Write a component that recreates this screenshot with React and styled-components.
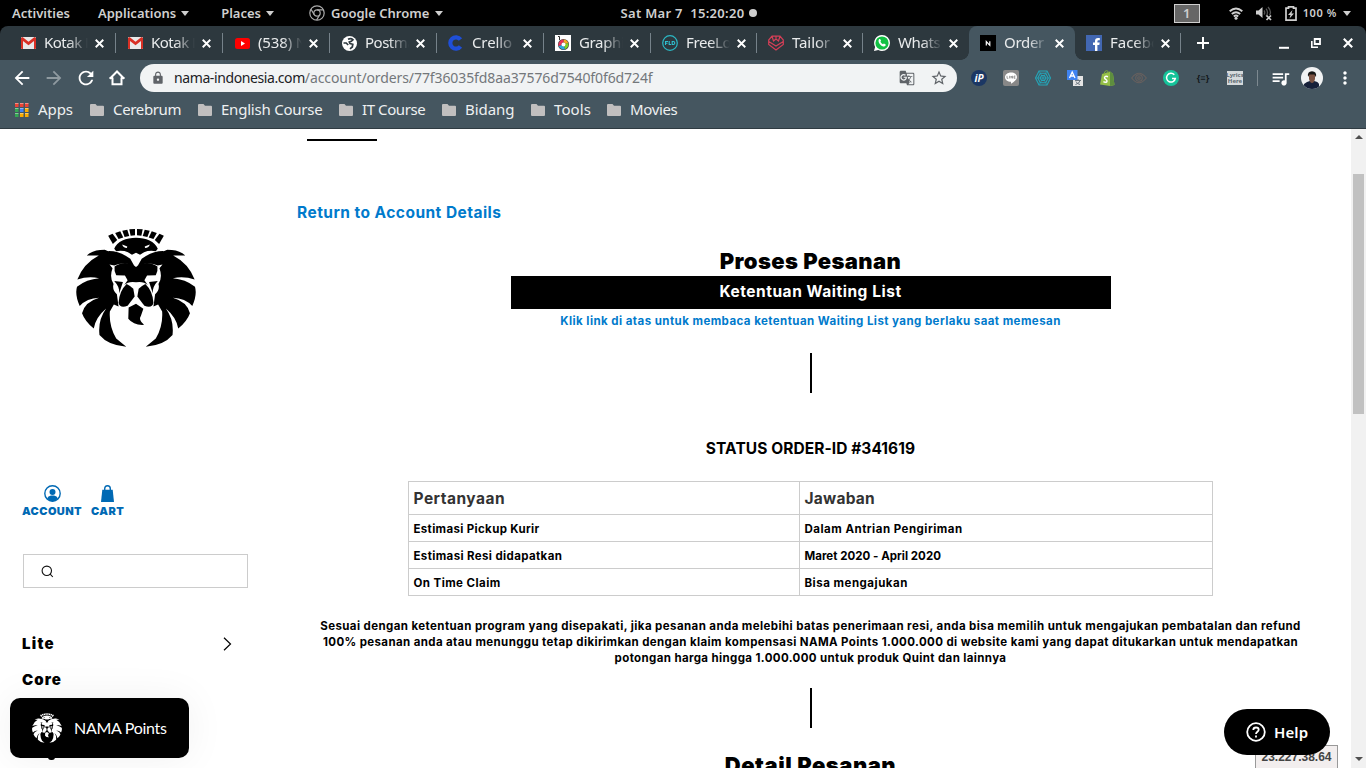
import React from "react";
import styled, { createGlobalStyle } from "styled-components";
import { MdArrowBack, MdArrowForward, MdRefresh, MdLock, MdGTranslate, MdStarBorder, MdMoreVert, MdQueueMusic } from "react-icons/md";

const ui = '"Noto Sans", sans-serif';
const brand = 'Inter, "Noto Sans", sans-serif';

const Global = createGlobalStyle`
  * { box-sizing: border-box; }
  body { margin: 0; background: #fff; overflow: hidden; }
  svg { display: block; flex: none; }
`;

const Screen = styled.div`
  width: 1366px;
  height: 768px;
  overflow: hidden;
  display: flex;
  flex-direction: column;
  position: relative;
  background: #000;
`;

/* Desktop bar */
const DesktopBar = styled.div`
  height: 26px;
  flex: none;
  display: grid;
  grid-template-columns: 1fr auto 1fr;
  align-items: center;
  padding: 0 15px 0 12px;
  color: #cfcfcf;
  font: 600 13px/26px ${ui};
  white-space: pre;
`;
const BarMenus = styled.div`
  display: flex;
  align-items: center;
`;
const BarMenu = styled.div`
  display: flex;
  align-items: center;
  gap: ${(p) => p.$gap || 5}px;
  margin-right: ${(p) => p.$after}px;
`;
const Caret = styled.i`
  border: solid transparent;
  border-width: 5px 4.5px 0;
  border-top-color: #cfcfcf;
`;
const Clock = styled.div`
  display: flex;
  align-items: center;
  gap: 4px;
  letter-spacing: 0.31px;
  margin-left: 14px;
`;
const Dot = styled.i`
  width: 8px;
  height: 8px;
  border-radius: 50%;
  background: #cfcfcf;
`;
const BarStatus = styled.div`
  display: flex;
  align-items: center;
  justify-content: flex-end;
`;
const Workspace = styled.span`
  width: 26px;
  height: 19px;
  border: 1px solid #cfcfcf;
  background: #666;
  text-align: center;
  line-height: 17px;
  margin-right: 29px;
`;
const Percent = styled.span`
  font-size: 11px;
  letter-spacing: 0.6px;
  margin: 0 6px 0 6px;
`;

/* Browser chrome */
const TabStrip = styled.div`
  height: 34px;
  flex: none;
  display: flex;
  background: #2d383e;
  border-radius: 8px 8px 0 0;
  padding-left: 9px;
`;
const TabBox = styled.div`
  position: relative;
  width: ${(p) => p.$w}px;
  flex: none;
  display: flex;
  align-items: center;
  padding: 0 0 0 11px;
  color: #e9ebec;
  background: ${(p) => (p.$active ? "#455660" : "transparent")};
  border-radius: 8px 8px 0 0;
  &::after {
    content: "";
    position: absolute;
    right: 0;
    top: 7px;
    width: 1px;
    height: 20px;
    background: ${(p) => (p.$line ? "#76828a" : "transparent")};
  }
`;
const Foot = styled.i`
  position: absolute;
  bottom: 0;
  ${(p) => p.$side}: -8px;
  width: 8px;
  height: 8px;
  background: radial-gradient(circle at ${(p) => (p.$side === "left" ? "0 0" : "100% 0")}, #2d383e 7.5px, #455660 8px);
`;
const TabTitle = styled.span`
  width: 44px;
  margin: 0 7px 0 8px;
  overflow: hidden;
  white-space: pre;
  font: 400 15px/32px ${ui};
  height: 34px;
  letter-spacing: ${(p) => p.$ls}px;
  mask-image: linear-gradient(90deg, #000 55%, transparent 100%);
`;
const NewTab = styled.div`
  display: flex;
  align-items: center;
  margin-left: 16px;
`;
const WindowButtons = styled.div`
  display: flex;
  align-items: center;
  gap: 22px;
  margin-left: auto;
  padding-right: 13px;
`;
const Toolbar = styled.div`
  height: 36px;
  flex: none;
  display: flex;
  align-items: center;
  background: #455660;
  color: #fff;
  padding: 0 11px 0 11px;
`;
const NavButtons = styled.div`
  display: flex;
  align-items: center;
  width: 129px;
  gap: 10px;
`;
const Omnibox = styled.div`
  width: 817px;
  height: 28px;
  border-radius: 14px;
  background: #f1f3f4;
  display: flex;
  align-items: center;
  color: #5f6368;
  padding: 0 9px 0 11px;
`;
const Address = styled.div`
  margin-left: 9px;
  flex: 1;
  display: flex;
  font: 400 14px/28px ${ui};
  color: #73777b;
  letter-spacing: -0.1px;
`;
const Host = styled.span`
  color: #202124;
  letter-spacing: -0.4px;
`;
const OmniActions = styled.div`
  display: flex;
  align-items: center;
  gap: 15px;
`;
const Extensions = styled.div`
  display: flex;
  align-items: center;
  gap: 16px;
  margin-left: 14px;
`;
const ToolEnd = styled.div`
  display: flex;
  align-items: center;
  margin-left: 14px;
`;
const Divider = styled.i`
  width: 1px;
  height: 16px;
  background: #7d8990;
  margin-right: 12px;
`;
const Bookmarks = styled.div`
  height: 33px;
  flex: none;
  display: flex;
  background: #455660;
  border-bottom: 1px solid #2f3b42;
  padding: 0 0 4px 15px;
  color: #eef0f1;
  font: 400 15px/26px ${ui};
  white-space: pre;
`;
const Bookmark = styled.div`
  display: flex;
  align-items: center;
  gap: 9px;
  width: ${(p) => p.$w}px;
  letter-spacing: ${(p) => p.$ls}px;
`;
const BookmarkName = styled.span`
  height: 28px;
`;

/* Web page */
const Page = styled.div`
  flex: 1;
  min-height: 0;
  display: flex;
  background: #fff;
  overflow: hidden;
`;
const Sidebar = styled.aside`
  width: 270px;
  padding: 99px 22px 0;
  color: #000;
`;
const LogoWrap = styled.div`
  display: flex;
  padding-left: 54px;
  height: 257px;
`;
const QuickLinks = styled.div`
  display: flex;
  gap: 9px;
  color: #0069b4;
  font: 900 11px/12px ${brand};
`;
const QuickLink = styled.a`
  display: flex;
  flex-direction: column;
  align-items: center;
  gap: 3px;
  letter-spacing: ${(p) => p.$ls}px;
`;
const SearchBox = styled.div`
  width: 225px;
  height: 34px;
  margin: 37px 0 0 1px;
  border: 1px solid #ccc;
  display: flex;
  align-items: center;
  padding-left: 17px;
`;
const SideNav = styled.nav`
  padding-top: 38px;
`;
const SideItem = styled.a`
  height: 36px;
  display: flex;
  align-items: center;
  justify-content: space-between;
  padding-right: 16px;
  font: 900 15px/36px ${brand};
  letter-spacing: ${(p) => p.$ls}px;
`;
const Main = styled.main`
  width: 1081px;
  display: flex;
  flex-direction: column;
  align-items: center;
  white-space: nowrap;
  font-family: ${brand};
  font-weight: 700;
  color: #000;
`;
const TitleRule = styled.i`
  align-self: flex-start;
  flex: none;
  width: 70px;
  height: 2px;
  background: #000;
  margin: 10px 0 0 37px;
`;
const BackLink = styled.a`
  align-self: flex-start;
  margin: 61px 0 0 27px;
  color: #007acc;
  font-size: 15.5px;
  line-height: 22px;
  letter-spacing: 0.46px;
`;
const Heading = styled.h2`
  margin: ${(p) => p.$top}px 0 0;
  font-size: 22px;
  font-weight: 900;
  line-height: 30px;
  letter-spacing: ${(p) => p.$ls}px;
`;
const TermsButton = styled.a`
  width: 600px;
  height: 33px;
  flex: none;
  background: #000;
  color: #fff;
  text-align: center;
  font-size: 15.5px;
  line-height: 32px;
  letter-spacing: 0.53px;
`;
const TermsNote = styled.a`
  color: #007acc;
  font-size: 11.5px;
  line-height: 16px;
  letter-spacing: 0.44px;
  margin-top: 4px;
`;
const Stem = styled.i`
  width: 2px;
  height: 40px;
  flex: none;
  background: #000;
  margin: ${(p) => p.$top}px 0 0 1px;
`;
const Status = styled.h3`
  margin: 45px 0 0;
  font-size: 15.5px;
  line-height: 22px;
  letter-spacing: 0.07px;
`;
const Table = styled.table`
  width: 805px;
  margin: 21px 1px 0 0;
  border-collapse: collapse;
  table-layout: fixed;
`;
const Cell = styled.td`
  border: 1px solid #ccc;
  height: ${(p) => (p.$head ? 33 : 27)}px;
  width: ${(p) => p.$w}px;
  padding: ${(p) => (p.$head ? 0 : 1)}px 5px 0;
  color: ${(p) => (p.$head ? "#333" : "#000")};
  font-size: ${(p) => (p.$head ? 15.5 : 11.5)}px;
  letter-spacing: ${(p) => p.$ls}px;
`;
const Policy = styled.div`
  margin-top: 22px;
  text-align: center;
  font-size: 11.5px;
  line-height: 16px;
`;
const PolicyLine = styled.div`
  letter-spacing: ${(p) => p.$ls}px;
`;
const Scrollbar = styled.div`
  width: 15px;
  background: #f1f1f1;
  display: flex;
  flex-direction: column;
  align-items: center;
  padding: 6px 0 7px;
`;
const ScrollArrow = styled.i`
  border: solid transparent;
  border-width: ${(p) => (p.$up ? "0 4px 4px" : "4px 4px 0")};
  border-color: ${(p) => (p.$up ? "transparent transparent #505050" : "#505050 transparent transparent")};
  margin-top: ${(p) => (p.$up ? 0 : "auto")};
`;
const Thumb = styled.i`
  width: 11px;
  height: 240px;
  background: #c1c1c1;
  margin-top: 35px;
`;

/* Floating widgets */
const PointsWidget = styled.div`
  position: absolute;
  left: 10px;
  top: 698px;
  width: 179px;
  height: 60px;
  border-radius: 10px;
  background: #000;
  color: #fff;
  display: flex;
  align-items: center;
  gap: 12px;
  padding-left: 22px;
  font: 400 16px/60px Lato, sans-serif;
  letter-spacing: -0.3px;
  box-shadow: 0 0 40px rgba(0, 0, 0, 0.06);
  &::after {
    content: "";
    position: absolute;
    left: 38px;
    bottom: -2px;
    width: 7px;
    height: 3px;
    background: #000;
    border-radius: 0 0 4px 4px;
  }
`;
const HelpWidget = styled.div`
  position: absolute;
  left: 1224px;
  top: 709px;
  width: 106px;
  height: 46px;
  border-radius: 23px;
  background: #000;
  color: #fff;
  display: flex;
  align-items: center;
  gap: 8px;
  padding-left: 22px;
  font: 600 15px/46px ${ui};
  letter-spacing: 0.1px;
`;
const HostAddress = styled.div`
  position: absolute;
  left: 1255px;
  top: 745px;
  width: 83px;
  height: 24px;
  border: 1px solid #999;
  background: #f2eeee;
  color: #444;
  text-align: center;
  font: 700 12px/22px "Liberation Sans", sans-serif;
`;

const LION_HALF = [
  "M146 61L159 55L173 74L160 86Z",
  "M167 53L182 48L191 66L177 71Z",
  "M188 46L203 43L209 62L195 65Z",
  "M209 42L226 41L226 60L213 61Z",
  "M229 67C200 67 172 78 164 100L170 107Q190 104 205 110L217 118L229 112ZM188 87L203 93L202 98Q190 97 188 87Z",
  "M82 120Q98 106 122 104L136 103L146 107Q180 106 212 130L224 151Q192 138 164 150L150 147L159 158Q149 185 162 205Q157 222 172 236L177 272L163 266L151 287Q148 330 170 368L200 392Q146 388 120 357Q115 312 140 278Q108 305 103 338Q76 315 68 292Q77 258 119 246Q82 247 61 271Q46 237 53 213Q82 191 119 188Q86 181 54 192Q72 144 118 120Z",
  "M229 154L219 147Q190 135 165 153Q163 168 170 179L196 180L204 194L194 208Q207 196 229 200Z",
  "M164 196L190 199L179 233Q181 214 164 196Z",
  "M201 205Q213 211 221 219L225 242L204 270Q181 279 177 261Q179 226 201 205Z",
];

function Lion({ size, color }) {
  return (
    <svg width={size} height={size} viewBox="50 38 358 358" fill={color} fillRule="evenodd">
      {LION_HALF.map((d) => <path key={d} d={d} />)}
      <g transform="translate(458 0) scale(-1 1)">
        {LION_HALF.map((d) => <path key={d} d={d} />)}
      </g>
      <path d="M207 275L229 264L251 279L244 299Q235 312 253 327Q222 329 206 309Z" />
    </svg>
  );
}

const Gmail = () => (
  <svg width="15" height="12" viewBox="0 0 15 12"><rect width="15" height="12" rx="1" fill="#e9e9e9" /><path d="M0 1v10q0 1 1 1h1V4l5.500 4.200L13 4v8h1q1 0 1-1V1L13.500 0 7.500 4.800 1.500 0Z" fill="#d93025" /></svg>
);
const YouTube = () => (
  <svg width="15" height="11" viewBox="0 0 15 11"><rect width="15" height="11" rx="2.500" fill="#f00" /><path d="M6 3l4 2.500L6 8z" fill="#fff" /></svg>
);
const Globe = () => (
  <svg width="15" height="15" viewBox="0 0 15 15"><circle cx="7.500" cy="7.500" r="7.500" fill="#fff" /><path d="M6 3.300Q9 1.800 11 3.800L9.300 5.300 7.300 6 8 7.500l2.800.8-.5 2.700L8 12.800M1.500 7h2.700l2 2" stroke="#2d383e" strokeWidth="1.700" fill="none" /></svg>
);
const Crello = () => (
  <svg width="16" height="16" viewBox="0 0 16 16"><path d="M12.500 4.500A5.700 5.700 0 1 0 12.500 11.500" fill="none" stroke="#1f4fd8" strokeWidth="4.200" /></svg>
);
const Burner = () => (
  <svg width="16" height="16" viewBox="0 0 16 16"><rect width="16" height="16" fill="#fff" /><path d="M3 1.500h1.500V5" stroke="#333" fill="none" /><circle cx="8.500" cy="9.500" r="5.500" fill="#444" /><g fill="none" strokeWidth="3"><path d="M8.500 6a3.500 3.500 0 0 1 3.300 2.500" stroke="#f5a623" /><path d="M11.800 8.500A3.500 3.500 0 0 1 9.500 12.800" stroke="#7ed321" /><path d="M9.500 12.800A3.500 3.500 0 0 1 5.200 10.500" stroke="#29a9e0" /><path d="M5.200 10.500A3.500 3.500 0 0 1 8.500 6" stroke="#e8305a" /></g><circle cx="8.500" cy="9.500" r="2" fill="#fff" /></svg>
);
const Fld = () => (
  <svg width="16" height="16" viewBox="0 0 16 16"><circle cx="8" cy="8" r="7.300" fill="none" stroke="#2bb8c4" strokeWidth="1.200" /><path d="M3.500 10V6.500H6M3.500 8.200h2M7.200 6v3.500H9M10.200 6.500v3h1q1.600 0 1.600-1.500t-1.600-1.500z" fill="none" stroke="#2fc0d0" strokeWidth="1.100" /></svg>
);
const Tailor = () => (
  <svg width="16" height="16" viewBox="0 0 16 16" fill="none" stroke="#d43f57" strokeWidth="1.200"><path d="M4 1.200h8L15.300 5v4.500L8 15 .7 9.500V5zM4 1.200L5.500 6 8 4l2.500 2L12 1.200M.7 6.500L8 11l7.300-4.500M8 1.200V4" /></svg>
);
const WhatsApp = () => (
  <svg width="16" height="16" viewBox="0 0 16 16"><path d="M8 0a8 8 0 0 1 0 16 8 8 0 0 1-3.700-1L0 16l1.100-4.100A8 8 0 0 1 8 0Z" fill="#fff" /><circle cx="8" cy="8" r="6.600" fill="#12c143" /><path d="M5 4.300c1-.8 1.600 0 2 1.400l-.6 1.100c.6 1.100 1.400 1.800 2.500 2.400l1-.8c1.700.7 2.200 1 1.700 2-1 1.600-3.200 1.200-5-.5C4.700 8.200 3.900 5.800 5 4.300Z" fill="#fff" /></svg>
);
const NamaIcon = () => (
  <svg width="16" height="16" viewBox="0 0 16 16"><rect width="16" height="16" fill="#000" /><path d="M6.300 10.500v-4l3.500 3.800v-4" fill="none" stroke="#fff" strokeWidth="1.200" /></svg>
);
const Facebook = () => (
  <svg width="16" height="16" viewBox="0 0 16 16"><rect width="16" height="16" fill="#4267b2" /><path d="M9 16v-6H7V7.600h2V6q0-3.100 3.100-3.100h1.700V5.200h-1.400q-1 0-1 1v1.400h2.300L13.300 10h-1.900v6z" fill="#fff" /></svg>
);
const CloseMark = ({ size = 9 }) => (
  <svg width={size} height={size} viewBox="0 0 10 10"><path d="M.8.8l8.400 8.400M9.200.8L.8 9.200" stroke="#fff" strokeWidth="2.100" /></svg>
);

const TABS = [
  [Gmail, "Kotak M", -0.5], [Gmail, "Kotak M", -0.5], [YouTube, "(538) N", -0.15], [Globe, "Postma", -0.5],
  [Crello, "Crello", -0.11], [Burner, "Graphi", -0.35], [Fld, "FreeLo", -0.4], [Tailor, "Tailor", -0.1],
  [WhatsApp, "Whats", -0.4], [NamaIcon, "Order", -0.3], [Facebook, "Facebo", -0.02],
];

const Badge = styled.span`
  width: 16px;
  height: 16px;
  flex: none;
  display: flex;
  align-items: center;
  justify-content: center;
  border-radius: ${(p) => p.$r || 0};
  background: ${(p) => p.$bg || "transparent"};
  color: ${(p) => p.$fg || "#fff"};
  font: ${(p) => p.$font};
  white-space: nowrap;
`;
const LyricsBadge = styled(Badge)`
  flex-direction: column;
  color: #5b6870;
  background: #d5d9db;
  height: 14px;
  font: 700 6px/6.5px ${ui};
`;

const LineIcon = () => (
  <svg width="16" height="16" viewBox="0 0 16 16"><rect width="16" height="16" rx="2" fill="#888" /><path d="M8 2.500c3.500 0 6 2 6 4.700 0 2.300-2.700 4.300-6 6.500v-2c-3.500 0-6-2-6-4.500S4.500 2.500 8 2.500Z" fill="#fff" /><path d="M4 5.800v2.500h1.300M6.600 5.800v2.600M8 8.400V6l1.500 2.300V5.800M12.400 6H11v2.300h1.400M11 7.100h1.300" stroke="#888" strokeWidth=".8" fill="none" /></svg>
);
const Polygon = () => (
  <svg width="16" height="16" viewBox="0 0 16 16" fill="none" stroke="#24a5b8" strokeWidth="1.100"><path d="M4 1h8l3.500 7-3.500 7H4L.5 8zM5.300 3.300h5.400L13.200 8l-2.500 4.700H5.300L2.800 8zM6.500 5.500h3L10.800 8l-1.300 2.500h-3L5.200 8z" /><path d="M4 1l8 14M12 1L4 15M.5 8h15" strokeWidth=".7" /></svg>
);
const Translate = () => (
  <svg width="16" height="16" viewBox="0 0 16 16"><rect x="6" y="6" width="10" height="10" fill="#e4e4e4" /><rect width="10.500" height="10" fill="#3f83f1" /><path d="M2.500 8L5.200 2 8 8M3.500 6h3.500" stroke="#fff" strokeWidth="1.300" fill="none" /><path d="M8 10.500h6M11 9v1.500M13 10.500q-.5 3-4.500 4M9 11.500q1 2.500 4 3" stroke="#6b7680" fill="none" /></svg>
);
const Shopify = () => (
  <svg width="15" height="16" viewBox="0 0 15 16"><path d="M2 4l8-2.500L13 4l1.500 11-4.500 1L0 14.500z" fill="#95bf47" /><path d="M10 1.500L13 4l1.500 11-4.500 1z" fill="#5e8e3e" /><path d="M4 4q.5-3.300 2.500-3.300T8.500 3" stroke="#7ca93a" fill="none" /><path d="M8 6.700Q4.800 5.500 4.500 7.800c0 1.700 2.700 1.600 2.500 3.300-.2 1.700-2.500 1.500-3.500.4" stroke="#fff" strokeWidth="1.500" fill="none" /></svg>
);
const Eye = () => (
  <svg width="16" height="12" viewBox="0 0 16 12" fill="none" stroke="#68605e" strokeWidth="1.100"><path d="M.7 6Q8-3.500 15.300 6 8 15.500.7 6Z" /><circle cx="8" cy="6" r="3.300" /><circle cx="8" cy="6" r="1.300" /></svg>
);
const Grammarly = () => (
  <svg width="16" height="16" viewBox="0 0 16 16"><circle cx="8" cy="8" r="8" fill="#15c39a" /><path d="M11.300 4.800A4.400 4.400 0 1 0 12.300 8.500H9" fill="none" stroke="#fff" strokeWidth="1.500" /></svg>
);
const Avatar = () => (
  <svg width="22" height="22" viewBox="0 0 22 22"><defs><clipPath id="face"><circle cx="11" cy="11" r="11" /></clipPath></defs><g clipPath="url(#face)"><rect width="22" height="22" fill="#f0f2f3" /><path d="M3 22V17q3-2.500 6-3h4q4 .5 5 3v5z" fill="#17213a" /><path d="M8 6h6v6q-1 4-3 4t-3-4z" fill="#7a5242" /><path d="M7 10Q6 4.500 11 4.300q5 .2 4 6L13.500 7.500H8.500z" fill="#151515" /></g></svg>
);
const Home = () => (
  <svg width="16" height="16" viewBox="0 0 16 16" fill="none" stroke="#fff" strokeWidth="2"><path d="M.8 8.800L8 1.500l7.200 7.300M.5 8.100H4M12 8.100h3.500M3.500 7.500V14.300h9V7.500" /></svg>
);
const ChromeIcon = () => (
  <svg width="16" height="16" viewBox="0 0 16 16" fill="none" stroke="#aaa" strokeWidth="1.200"><circle cx="8" cy="8" r="7.200" /><circle cx="8" cy="8" r="3.200" /><path d="M8 4.800h6.300M5.200 9.600L2 4.200M10.800 9.600L7.600 15" /></svg>
);
const Wifi = () => (
  <svg width="14" height="13" viewBox="0 0 14 13" fill="none" stroke="#cfcfcf" strokeWidth="1.900"><path d="M.7 4.300Q7-1.300 13.300 4.300M2.800 7Q7 3.300 11.200 7M4.800 9.500Q7 7.600 9.200 9.500" /><circle cx="7" cy="11.300" r="1.500" fill="#cfcfcf" stroke="none" /></svg>
);
const Muted = () => (
  <svg width="16" height="15" viewBox="0 0 16 15"><path d="M0 4.500h2.500L6.500 1v11L2.500 8.500H0z" fill="#cfcfcf" /><path d="M8 4.500q1.500 2 0 4M10 2.700q3 3.800 0 7.600M12 1q4 4.500 1.500 8" stroke="#555" strokeWidth="1.300" fill="none" /><path d="M10.500 9.500l4.500 4.500M15 9.500L10.500 14" stroke="#cfcfcf" strokeWidth="1.700" /></svg>
);
const Battery = () => (
  <svg width="12" height="15" viewBox="0 0 12 15"><path d="M1 2.200h2.500V.8h5v1.400H11v12H1z" fill="none" stroke="#cfcfcf" strokeWidth="1.700" /><path d="M7.500 4L3 9h2.500l-1 3.500L9 7.500H6.500z" fill="#cfcfcf" /></svg>
);
const AppsGrid = () => (
  <svg width="14" height="14" viewBox="0 0 14 14">
    {["#ea4335", "#ea4335", "#ea4335", "#34a853", "#4285f4", "#f9ab00", "#34a853", "#f9ab00", "#f9ab00"].map((c, i) => (
      <g key={i}><rect x={(i % 3) * 5} y={Math.floor(i / 3) * 5} width="3.500" height="4" fill={c} /><rect x={(i % 3) * 5} y={Math.floor(i / 3) * 5} width="3.500" height=".8" fill="#fff" opacity=".5" /></g>
    ))}
  </svg>
);
const Folder = () => (
  <svg width="14" height="12" viewBox="0 0 14 12"><path d="M1 0h4.500L7 1.700h6q1 0 1 1V11q0 1-1 1H1q-1 0-1-1V1q0-1 1-1z" fill="#c1bfbf" /></svg>
);
const Account = () => (
  <svg width="17" height="17" viewBox="0 0 17 17"><circle cx="8.500" cy="8.500" r="7.700" fill="none" stroke="#0069b4" strokeWidth="1.400" /><circle cx="8.500" cy="7" r="3" fill="#0069b4" /><path d="M3 13.500q1-2.500 4-3h3q3 .5 4 3-2.200 2.700-5.500 2.700T3 13.500Z" fill="#0069b4" /></svg>
);
const Bag = () => (
  <svg width="13" height="17" viewBox="0 0 13 17"><path d="M1.300 4.800h10.400L13 17H0z" fill="#0069b4" /><path d="M3.700 6V3.700Q3.700.8 6.500.8t2.800 2.900V6" fill="none" stroke="#0069b4" strokeWidth="1.400" /></svg>
);

const FOLDERS = [
  ["Cerebrum", 108, -0.35], ["English Course", 141, -0.22], ["IT Course", 103, -0.42],
  ["Bidang", 89, -0.05], ["Tools", 76, 0.1], ["Movies", 90, -0.35],
];
const ROWS = [
  ["Estimasi Pickup Kurir", 0.34, "Dalam Antrian Pengiriman", 0.49],
  ["Estimasi Resi didapatkan", 0.37, "Maret 2020 - April 2020", 0.02],
  ["On Time Claim", 0.43, "Bisa mengajukan", 0.5],
];

export default function App() {
  return (
    <Screen>
      <Global />
      <DesktopBar>
        <BarMenus>
          <BarMenu $after={28}>Activities</BarMenu>
          <BarMenu $after={32}>Applications<Caret /></BarMenu>
          <BarMenu $after={35}>Places<Caret /></BarMenu>
          <BarMenu $gap={6}><ChromeIcon />Google Chrome<Caret /></BarMenu>
        </BarMenus>
        <Clock>Sat Mar 7  15:20:20<Dot /></Clock>
        <BarStatus>
          <Workspace>1</Workspace>
          <BarMenu $gap={13}><Wifi /><Muted /><Battery /></BarMenu>
          <Percent>100 %</Percent>
          <Caret />
        </BarStatus>
      </DesktopBar>

      <TabStrip>
        {TABS.map(([Icon, title, ls], i) => (
          <TabBox key={i} $w={i < 6 ? 107 : 106} $active={i === 9} $line={i !== 8 && i !== 9}>
            {i === 9 && <Foot $side="left" />}
            {i === 9 && <Foot $side="right" />}
            <Badge><Icon /></Badge>
            <TabTitle $ls={ls}>{title}</TabTitle>
            <CloseMark />
          </TabBox>
        ))}
        <NewTab>
          <svg width="12" height="12" viewBox="0 0 12 12"><path d="M6 0v12M0 6h12" stroke="#fff" strokeWidth="2" /></svg>
        </NewTab>
        <WindowButtons>
          <svg width="10" height="11" viewBox="0 0 10 11"><path d="M0 9.800h10" stroke="#fff" strokeWidth="2" /></svg>
          <svg width="10" height="10" viewBox="0 0 10 10" fill="none" stroke="#fff"><path d="M3.700 1h5.300v5H3.700z" strokeWidth="1.800" /><path d="M.8 3v6.200H7" strokeWidth="1.600" /></svg>
          <CloseMark size={10} />
        </WindowButtons>
      </TabStrip>

      <Toolbar>
        <NavButtons>
          <MdArrowBack size={22} />
          <MdArrowForward size={22} color="#8f9aa0" />
          <MdRefresh size={22} />
          <Badge $r="0"><svg width="3" height="1" /><Home /></Badge>
        </NavButtons>
        <Omnibox>
          <MdLock size={14} />
          <Address><Host>nama-indonesia.com</Host>/account/orders/77f36035fd8aa37576d7540f0f6d724f</Address>
          <OmniActions><MdGTranslate size={16} /><MdStarBorder size={18} /></OmniActions>
        </Omnibox>
        <Extensions>
          <Badge $r="50%" $bg="#1b3764" $font={`italic 700 10px/16px ${ui}`}>iP</Badge>
          <Badge><LineIcon /></Badge>
          <Badge><Polygon /></Badge>
          <Badge><Translate /></Badge>
          <Badge><Shopify /></Badge>
          <Badge><Eye /></Badge>
          <Badge><Grammarly /></Badge>
          <Badge $fg="#14181b" $font={`700 9px/16px ${ui}`}>{"{≡}"}</Badge>
          <LyricsBadge><span>Lyrics</span><span>Here</span></LyricsBadge>
        </Extensions>
        <ToolEnd>
          <Divider />
          <BarMenu $gap={10} $after={12}><MdQueueMusic size={21} /><Avatar /></BarMenu>
          <MdMoreVert size={20} />
        </ToolEnd>
      </Toolbar>

      <Bookmarks>
        <Bookmark $w={75} $ls={-0.06}><AppsGrid /><BookmarkName>Apps</BookmarkName></Bookmark>
        {FOLDERS.map(([name, w, ls]) => (
          <Bookmark key={name} $w={w} $ls={ls}><Folder /><BookmarkName>{name}</BookmarkName></Bookmark>
        ))}
      </Bookmarks>

      <Page>
        <Sidebar>
          <LogoWrap><Lion size={120} color="#000" /></LogoWrap>
          <QuickLinks>
            <QuickLink $ls={0.41}><Account />ACCOUNT</QuickLink>
            <QuickLink $ls={0.4}><Bag />CART</QuickLink>
          </QuickLinks>
          <SearchBox>
            <svg width="13" height="13" viewBox="0 0 13 13" fill="none" stroke="#111" strokeWidth="1.100"><circle cx="5.800" cy="5.800" r="4.700" /><path d="M9.200 9.200l2.600 2.800" /></svg>
          </SearchBox>
          <SideNav>
            <SideItem $ls={1.28}>Lite<svg width="9" height="14" viewBox="0 0 9 14"><path d="M1 .8L7.500 7 1 13.200" fill="none" stroke="#000" strokeWidth="1.200" /></svg></SideItem>
            <SideItem $ls={1.07}>Core</SideItem>
          </SideNav>
        </Sidebar>
        <Main>
          <TitleRule />
          <BackLink>Return to Account Details</BackLink>
          <Heading $top={22} $ls={0.39}>Proses Pesanan</Heading>
          <TermsButton>Ketentuan Waiting List</TermsButton>
          <TermsNote>Klik link di atas untuk membaca ketentuan Waiting List yang berlaku saat memesan</TermsNote>
          <Stem $top={24} />
          <Status>STATUS ORDER-ID #341619</Status>
          <Table>
            <tbody>
              <tr><Cell $head $w={391} $ls={0.48}>Pertanyaan</Cell><Cell $head $w={413} $ls={0.25}>Jawaban</Cell></tr>
              {ROWS.map(([q, ql, a, al]) => (
                <tr key={q}><Cell $ls={ql}>{q}</Cell><Cell $ls={al}>{a}</Cell></tr>
              ))}
            </tbody>
          </Table>
          <Policy>
            <PolicyLine $ls={0.41}>Sesuai dengan ketentuan program yang disepakati, jika pesanan anda melebihi batas penerimaan resi, anda bisa memilih untuk mengajukan pembatalan dan refund</PolicyLine>
            <PolicyLine $ls={0.38}>100% pesanan anda atau menunggu tetap dikirimkan dengan klaim kompensasi NAMA Points 1.000.000 di website kami yang dapat ditukarkan untuk mendapatkan</PolicyLine>
            <PolicyLine $ls={0.37}>potongan harga hingga 1.000.000 untuk produk Quint dan lainnya</PolicyLine>
          </Policy>
          <Stem $top={22} />
          <Heading $top={22} $ls={0.53}>Detail Pesanan</Heading>
        </Main>
        <Scrollbar>
          <ScrollArrow $up />
          <Thumb />
          <ScrollArrow />
        </Scrollbar>
      </Page>

      <PointsWidget><Lion size={30} color="#fff" />NAMA Points</PointsWidget>
      <HostAddress>23.227.38.64</HostAddress>
      <HelpWidget>
        <svg width="20" height="20" viewBox="0 0 20 20" fill="none" stroke="#fff" strokeWidth="1.800"><circle cx="10" cy="10" r="8.800" /><path d="M7.300 8Q7.300 5.500 10 5.500t2.700 2.300C12.700 9.700 10 9.800 10 12M10 13.500v2" /></svg>
        Help
      </HelpWidget>
    </Screen>
  );
}
